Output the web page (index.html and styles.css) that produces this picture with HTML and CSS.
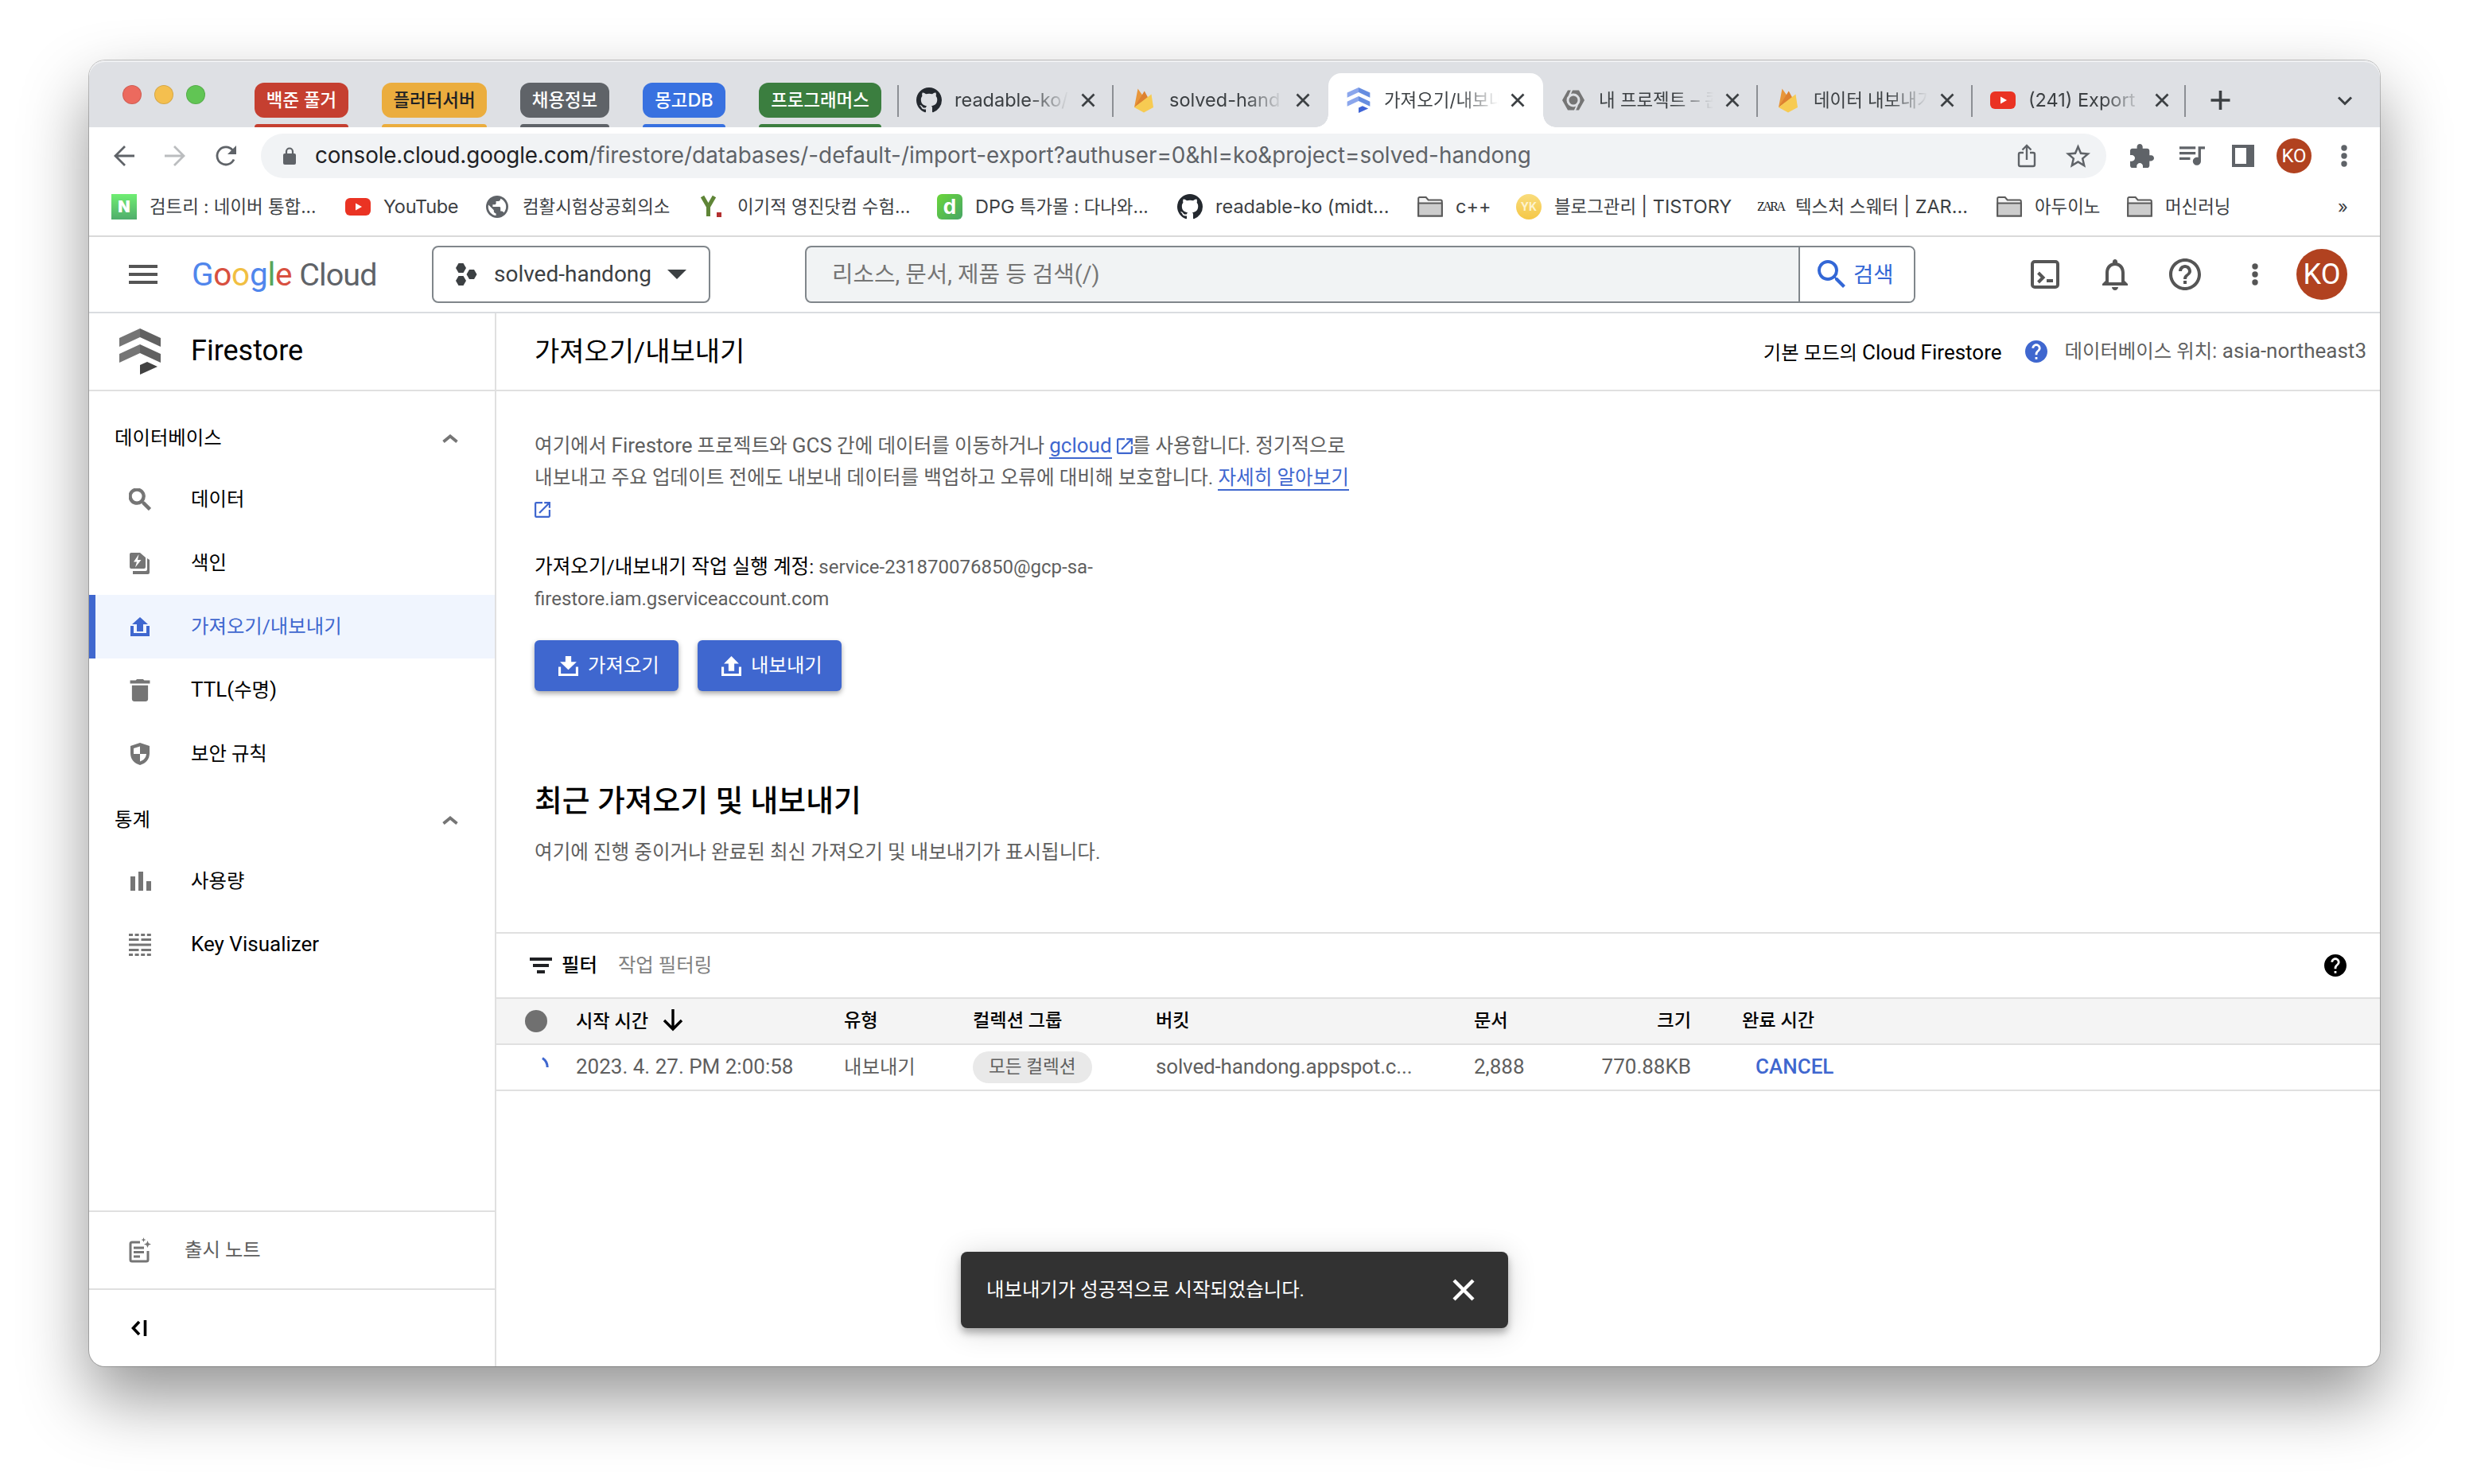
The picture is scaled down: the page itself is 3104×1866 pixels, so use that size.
FILE: index.html
```html
<!DOCTYPE html>
<html lang="ko">
<head>
  <meta charset="UTF-8" />
  <title>가져오기/내보내기 – Firestore</title>
  <link rel="stylesheet" href="styles.css">
</head>
<body>

  <!-- icons -->
  <svg class="sprite" xmlns="http://www.w3.org/2000/svg">
    <symbol id="i-close" viewBox="0 0 16 16"><path d="M2 2l12 12M14 2L2 14" fill="none" stroke="currentColor" stroke-width="2.2"/></symbol>
    <symbol id="i-github" viewBox="0 0 16 16"><path d="M8 0C3.58 0 0 3.58 0 8c0 3.54 2.29 6.53 5.47 7.59.4.07.55-.17.55-.38 0-.19-.01-.82-.01-1.49-2.01.37-2.53-.49-2.69-.94-.09-.23-.48-.94-.82-1.13-.28-.15-.68-.52-.01-.53.63-.01 1.08.58 1.23.82.72 1.21 1.87.87 2.33.66.07-.52.28-.87.51-1.07-1.78-.2-3.64-.89-3.64-3.95 0-.87.31-1.59.82-2.15-.08-.2-.36-1.02.08-2.12 0 0 .67-.21 2.2.82.64-.18 1.32-.27 2-.27.68 0 1.36.09 2 .27 1.53-1.04 2.2-.82 2.2-.82.44 1.1.16 1.92.08 2.12.51.56.82 1.27.82 2.15 0 3.07-1.87 3.75-3.65 3.95.29.25.54.73.54 1.48 0 1.07-.01 1.93-.01 2.2 0 .21.15.46.55.38A8.013 8.013 0 0 0 16 8c0-4.42-3.58-8-8-8z" fill="#24292f"/></symbol>
    <symbol id="i-firebase" viewBox="0 0 32 32"><path d="M4 25L8.500 1.500l6 8.500L16.500 5l4 7z" fill="#e8963a"/><path d="M4 25L16.800 4.500l4.500 8.500z" fill="#dd8130"/><path d="M4 25L25.500 8.500 28 25l-12 6.500z" fill="#f7cb52"/></symbol>
    <symbol id="i-firestore" viewBox="0 0 52 58"><path class="fs-l" d="M26 0L0 12v11l26-12zM26 20L0 32v11l26-12z"/><path class="fs-r" d="M26 0l26 12v11L26 11zM26 20l26 12v11L26 31z"/><path class="fs-d" d="M26 46l9-4 13 6-22 10z"/></symbol>
    <symbol id="i-youtube" viewBox="0 0 32 32"><rect x="0" y="5" width="32" height="22" rx="6" fill="#ea3323"/><path d="M13 11.500v9l8-4.500z" fill="#fff"/></symbol>
    <symbol id="i-folder" viewBox="0 0 32 32"><path d="M1.200 27.500V5.500a1.500 1.500 0 0 1 1.500-1.500h8l3 3.500h15.600a1.500 1.500 0 0 1 1.500 1.500v18.500z" fill="#f4f4f4" stroke="#5a5a5a" stroke-width="2"/><path d="M1.200 11.500h29.600v16H1.200z" fill="#cdcdcd" stroke="#5a5a5a" stroke-width="2"/></symbol>
    <symbol id="i-globe" viewBox="2 2 20 20"><path fill="#5f6368" d="M12 2C6.480 2 2 6.480 2 12s4.480 10 10 10 10-4.480 10-10S17.520 2 12 2zm-1 17.930c-3.950-.49-7-3.850-7-7.930 0-.62.080-1.210.21-1.790L9 15v1c0 1.100.9 2 2 2v1.930zm6.900-2.540c-.26-.81-1-1.390-1.900-1.390h-1v-3c0-.55-.45-1-1-1H8v-2h2c.55 0 1-.45 1-1V7h2c1.100 0 2-.9 2-2v-.41c2.930 1.190 5 4.060 5 7.410 0 2.080-.8 3.970-2.100 5.390z"/></symbol>
    <symbol id="i-search" viewBox="3 3 18 18"><path fill="currentColor" d="M15.500 14h-.79l-.28-.27A6.471 6.471 0 0 0 16 9.500 6.500 6.500 0 1 0 9.500 16c1.610 0 3.090-.59 4.230-1.570l.27.28v.79l5 4.990L20.490 19l-4.990-5zm-6 0C7.010 14 5 11.990 5 9.500S7.010 5 9.500 5 14 7.010 14 9.500 11.990 14 9.500 14z"/></symbol>
    <symbol id="i-open" viewBox="3 3 18 18"><path fill="currentColor" d="M19 19H5V5h7V3H5a2 2 0 0 0-2 2v14a2 2 0 0 0 2 2h14c1.100 0 2-.9 2-2v-7h-2v7zM14 3v2h3.590l-9.830 9.830 1.410 1.410L19 6.410V10h2V3h-7z"/></symbol>
    <symbol id="i-help" viewBox="2 2 20 20"><path fill="currentColor" d="M12 2C6.480 2 2 6.480 2 12s4.480 10 10 10 10-4.480 10-10S17.520 2 12 2zm1 17h-2v-2h2v2zm2.070-7.750l-.9.92C13.450 12.900 13 13.500 13 15h-2v-.5c0-1.100.45-2.100 1.170-2.830l1.240-1.260c.37-.36.59-.86.59-1.410 0-1.100-.9-2-2-2s-2 .9-2 2H8c0-2.210 1.790-4 4-4s4 1.790 4 4c0 .88-.36 1.680-.93 2.250z"/></symbol>
    <symbol id="i-upload" viewBox="0 0 24 24"><path fill="currentColor" d="M0 11h4v9h16v-9h4v13H0zM12 0l10 9h-6v9H8V9H2z"/></symbol>
    <symbol id="i-export" viewBox="0 0 24 24"><path fill="currentColor" d="M0 13h3v8h18v-8h3v11H0zM12 0l9 9h-5.500v9h-7V9H3z"/></symbol>
    <symbol id="i-import" viewBox="0 0 24 24"><path fill="currentColor" d="M0 13h3v8h18v-8h3v11H0zM8.500 0h7v7H22l-10 9.500L2 7h6.500z"/></symbol>
    <symbol id="i-up" viewBox="0 0 20 11"><path d="M1.500 9.500L10 2.500l8.500 7" fill="none" stroke="#757575" stroke-width="3.800"/></symbol>
    <symbol id="i-dots" viewBox="0 0 8 28"><circle cx="4" cy="4" r="3.700"/><circle cx="4" cy="14" r="3.700"/><circle cx="4" cy="24" r="3.700"/></symbol>
  </svg>

  <div class="window">

    <div class="tabstrip">
      <div class="lights"><i class="red"></i><i class="yellow"></i><i class="green"></i></div>
      <div class="groups">
        <div class="group g-red"><span>백준 풀거</span></div>
        <div class="group g-orange"><span>플러터서버</span></div>
        <div class="group g-grey"><span>채용정보</span></div>
        <div class="group g-blue"><span>몽고<span class="en">DB</span></span></div>
        <div class="group g-green"><span>프로그래머스</span></div>
      </div>
      <div class="tabs">
        <div class="tab"><svg class="fav"><use href="#i-github"/></svg><span class="name en">readable-ko/</span><svg class="x"><use href="#i-close"/></svg></div>
        <div class="tab"><svg class="fav"><use href="#i-firebase"/></svg><span class="name en">solved-hand</span><svg class="x"><use href="#i-close"/></svg></div>
        <div class="tab active"><svg class="fav blue-fs"><use href="#i-firestore"/></svg><span class="name">가져오기/내보내기</span><svg class="x"><use href="#i-close"/></svg></div>
        <div class="tab"><svg class="fav" viewBox="0 0 32 32"><path d="M9 3.500h14L30 16l-7 12.500H9L2 16z" fill="#757575"/><circle cx="16" cy="16" r="7" fill="none" stroke="#dee0e4" stroke-width="3"/><path d="M17 31l4-9M15 1l-4 9" stroke="#dee0e4" stroke-width="2"/></svg><span class="name">내 프로젝트 – 콘</span><svg class="x"><use href="#i-close"/></svg></div>
        <div class="tab"><svg class="fav"><use href="#i-firebase"/></svg><span class="name">데이터 내보내기</span><svg class="x"><use href="#i-close"/></svg></div>
        <div class="tab"><svg class="fav"><use href="#i-youtube"/></svg><span class="name en">(241) Export</span><svg class="x"><use href="#i-close"/></svg></div>
      </div>
      <svg class="newtab" viewBox="0 0 24 24"><path d="M12 0v24M0 12h24" stroke="#3c4043" stroke-width="3.600"/></svg>
      <svg class="tabmenu" viewBox="0 0 18 12"><path d="M1 1.500l8 8 8-8" fill="none" stroke="#3c4043" stroke-width="3"/></svg>
    </div>

    <div class="toolbar">
      <svg class="nav" viewBox="0 0 26 26"><path d="M26 13H2M14 1L2 13l12 12" fill="none" stroke="#5f6368" stroke-width="2.800"/></svg>
      <svg class="nav" viewBox="0 0 26 26"><path d="M0 13h24M12 1l12 12-12 12" fill="none" stroke="#bbbdbf" stroke-width="2.800"/></svg>
      <svg class="nav" viewBox="0 0 26 26"><path d="M23 17.500A11 11 0 1 1 21.500 6" fill="none" stroke="#5f6368" stroke-width="2.800"/><path d="M26 0v11H15z" fill="#5f6368"/></svg>
      <div class="omnibox">
        <svg class="lock" viewBox="0 0 16 22"><rect y="8" width="16" height="14" rx="2" fill="#5f6368"/><path d="M4 9V5.500a4 4 0 0 1 8 0V9" fill="none" stroke="#5f6368" stroke-width="2.200"/></svg>
        <span class="url"><b>console.cloud.google.com</b>/firestore/databases/-default-/import-export?authuser=0&amp;hl=ko&amp;project=solved-handong</span>
        <svg class="share" viewBox="0 0 22 30"><path d="M7 11H3a2 2 0 0 0-2 2v13a2 2 0 0 0 2 2h16a2 2 0 0 0 2-2V13a2 2 0 0 0-2-2h-4M11 20V2M5.500 7.500L11 2l5.500 5.500" fill="none" stroke="#5f6368" stroke-width="2.400"/></svg>
        <svg class="star" viewBox="2 2 20 19"><path fill="#5f6368" d="M22 9.240l-7.190-.62L12 2 9.190 8.630 2 9.240l5.460 4.730L5.820 21 12 17.270 18.180 21l-1.630-7.030L22 9.240zM12 15.400l-3.760 2.270 1-4.280-3.320-2.880 4.380-.38L12 6.100l1.710 4.040 4.380.38-3.320 2.880 1 4.280L12 15.400z"/></svg>
      </div>
      <svg class="puzzle" viewBox="2 1 21 21"><path fill="#5f6368" d="M20.500 11H19V7c0-1.100-.9-2-2-2h-4V3.500C13 2.120 11.880 1 10.500 1S8 2.120 8 3.500V5H4c-1.100 0-1.990.9-1.990 2v3.800H3.500c1.490 0 2.700 1.210 2.700 2.700s-1.210 2.700-2.700 2.700H2V20c0 1.100.9 2 2 2h3.800v-1.500c0-1.490 1.210-2.700 2.700-2.700 1.490 0 2.700 1.210 2.700 2.700V22H17c1.100 0 2-.9 2-2v-4h1.500c1.380 0 2.500-1.120 2.500-2.500S21.880 11 20.500 11z"/></svg>
      <svg class="queue" viewBox="3 6 19 14"><path fill="#5f6368" d="M15 6H3v2h12V6zm0 4H3v2h12v-2zM3 16h8v-2H3v2zM17 6v8.180c-.31-.11-.65-.18-1-.18-1.660 0-3 1.340-3 3s1.340 3 3 3 3-1.340 3-3V8h3V6h-5z"/></svg>
      <svg class="panel" viewBox="0 0 28 28"><path d="M0 0h28v28H0zM4 4v20h14V4z" fill="#5f6368" fill-rule="evenodd"/></svg>
      <div class="me small">KO</div>
      <svg class="more"><use href="#i-dots"/></svg>
    </div>

    <div class="bookmarks">
      <div class="bm"><i class="ic naver">N</i>검트리 : 네이버 통합...</div>
      <div class="bm"><svg class="ic"><use href="#i-youtube"/></svg><span class="en">YouTube</span></div>
      <div class="bm"><svg class="ic globe"><use href="#i-globe"/></svg>컴활시험상공회의소</div>
      <div class="bm"><svg class="ic" viewBox="0 0 32 32"><path d="M4 3l7.500 13v12M19 3l-7.500 13" fill="none" stroke="#5f8537" stroke-width="5"/><rect x="22" y="23" width="6" height="6" fill="#b33030"/></svg>이기적 영진닷컴 수험...</div>
      <div class="bm"><i class="ic danawa">d</i><span><span class="en">DPG</span> 특가몰 : 다나와...</span></div>
      <div class="bm"><svg class="ic"><use href="#i-github"/></svg><span class="en">readable-ko (midt...</span></div>
      <div class="bm"><svg class="ic"><use href="#i-folder"/></svg><span class="en">c++</span></div>
      <div class="bm"><i class="ic yk">YK</i><span>블로그관리 <span class="en">| TISTORY</span></span></div>
      <div class="bm"><i class="ic zara">ZARA</i><span>텍스처 스웨터 <span class="en">| ZAR...</span></span></div>
      <div class="bm"><svg class="ic"><use href="#i-folder"/></svg>아두이노</div>
      <div class="bm"><svg class="ic"><use href="#i-folder"/></svg>머신러닝</div>
      <div class="bm overflow">»</div>
    </div>

    <header class="topbar">
      <svg class="burger" viewBox="0 0 36 24"><path d="M0 2h36M0 12h36M0 22h36" stroke="#555" stroke-width="4"/></svg>
      <div class="logo"><span class="c-b">G</span><span class="c-r">o</span><span class="c-y">o</span><span class="c-b">g</span><span class="c-g">l</span><span class="c-r">e</span><span class="cloud">Cloud</span></div>
      <div class="project">
        <svg class="hex" viewBox="0 0 27 28"><path d="M3.500 0h6L13 6l-3.500 6h-6L0 6zM17 8h6l3.500 6-3.500 6h-6l-3.500-6zM3.500 16h6l3.500 6-3.500 6h-6L0 22z" fill="#3c4043"/></svg>
        <span>solved-handong</span>
        <i class="caret"></i>
      </div>
      <div class="search">
        <div class="placeholder">리소스, 문서, 제품 등 검색(/)</div>
        <div class="go"><svg><use href="#i-search"/></svg>검색</div>
      </div>
      <div class="tools">
        <svg class="shell" viewBox="0 0 36 36"><rect x="2" y="2" width="32" height="32" rx="3" fill="none" stroke="#555" stroke-width="4"/><path d="M9.500 16l6 6-6 6" fill="none" stroke="#555" stroke-width="4"/><path d="M20 24h8v4h-8z" fill="#555"/></svg>
        <svg class="bell" viewBox="4 2.500 16 19.500"><path fill="#555" d="M12 22c1.100 0 2-.9 2-2h-4c0 1.100.9 2 2 2zm6-6v-5c0-3.070-1.630-5.640-4.500-6.320V4c0-.83-.67-1.500-1.500-1.500s-1.500.67-1.500 1.500v.68C7.640 5.360 6 7.920 6 11v5l-2 2v1h16v-1l-2-2zm-2 1H8v-6c0-2.480 1.510-4.500 4-4.500s4 2.020 4 4.500v6z"/></svg>
        <svg class="help" viewBox="2 2 20 20"><path fill="#555" d="M11 18h2v-2h-2v2zm1-16C6.480 2 2 6.480 2 12s4.480 10 10 10 10-4.480 10-10S17.520 2 12 2zm0 18c-4.410 0-8-3.590-8-8s3.590-8 8-8 8 3.590 8 8-3.590 8-8 8zm0-14c-2.210 0-4 1.790-4 4h2c0-1.100.9-2 2-2s2 .9 2 2c0 2-3 1.750-3 5h2c0-2.250 3-2.500 3-5 0-2.210-1.790-4-4-4z"/></svg>
        <svg class="dots"><use href="#i-dots"/></svg>
        <div class="me">KO</div>
      </div>
    </header>

    <div class="content">
      <aside class="sidebar">
        <div class="product"><svg class="grey-fs"><use href="#i-firestore"/></svg>Firestore</div>
        <nav>
          <div class="section">데이터베이스<svg><use href="#i-up"/></svg></div>
          <div class="item"><span class="icon"><svg class="w28 bold"><use href="#i-search"/></svg></span>데이터</div>
          <div class="item"><span class="icon"><svg class="w28" viewBox="0 0 28 28"><path d="M3 1h11l7 6v12a2 2 0 0 1-2 2H3a2 2 0 0 1-2-2V3a2 2 0 0 1 2-2zM5 24h16a2 2 0 0 0 2-2V8l3 2v16a2 2 0 0 1-2 2H5z" fill="#757575"/><path d="M12.500 3L6 12.500h4L8 19.500l7.500-9.500h-4.500z" fill="#fff"/></svg></span>색인</div>
          <div class="item selected"><span class="icon"><svg class="w24"><use href="#i-upload"/></svg></span>가져오기/내보내기</div>
          <div class="item"><span class="icon"><svg class="w28" viewBox="3 3 18 18"><path fill="#757575" d="M5.500 19c0 1.100.9 2 2 2h9c1.100 0 2-.9 2-2V8H5.500v11zM20 4h-4.500l-1-1h-5l-1 1H4v2.500h16V4z"/></svg></span><span><span class="en">TTL(</span>수명<span class="en">)</span></span></div>
          <div class="item"><span class="icon"><svg class="w28" viewBox="0 0 28 28"><path d="M14 0l12 4v9c0 8-5 13-12 15C7 26 2 21 2 13V4z" fill="#757575"/><path d="M14 4.500V14H6V7zM14 14h8c-.5 5-3.500 8-8 9.500z" fill="#fff"/></svg></span>보안 규칙</div>
          <div class="section">통계<svg><use href="#i-up"/></svg></div>
          <div class="item"><span class="icon"><svg class="w28" viewBox="0 0 28 28"><path d="M2 8h6v18H2zM12 2h6v24h-6zM22 14h6v12h-6z" fill="#757575"/></svg></span>사용량</div>
          <div class="item"><span class="icon"><svg class="w28" viewBox="0 0 28 28"><path d="M0 1.500h28M0 26.500h28" stroke="#757575" stroke-width="3" stroke-dasharray="5 2.600"/><path d="M0 7.500h12.500M15.500 7.500H28M0 14h28M0 20.500h12.500M15.500 20.500H28" stroke="#757575" stroke-width="3"/></svg></span><span class="en">Key Visualizer</span></div>
        </nav>
        <div class="notes"><svg viewBox="0 0 28 32"><path d="M14 6H4a2 2 0 0 0-2 2v20a2 2 0 0 0 2 2h18a2 2 0 0 0 2-2V17" fill="none" stroke="#757575" stroke-width="3"/><path d="M6 13h13M6 18.500h13M6 24h8" stroke="#757575" stroke-width="3"/><path d="M23.500 4l1.300 3.200L28 8.500l-3.200 1.300L23.500 13l-1.300-3.200L19 8.500l3.200-1.300zM18.500 0l.8 2.200 2.200.8-2.200.8-.8 2.200-.8-2.200-2.200-.8 2.200-.8z" fill="#757575"/></svg>출시 노트</div>
        <div class="collapse"><svg viewBox="0 0 20 20"><path d="M10 2l-7.500 8L10 18M17.500 0v20" fill="none" stroke="#000" stroke-width="3.600"/></svg></div>
      </aside>

      <main>
        <div class="titlebar">
          <h1>가져오기/내보내기</h1>
          <span class="mode">기본 모드의 <span class="en">Cloud Firestore</span></span>
          <svg><use href="#i-help"/></svg>
          <span class="location">데이터베이스 위치<span class="en">: asia-northeast3</span></span>
        </div>

        <div class="intro">
          <p>여기에서 <span class="en">Firestore</span> 프로젝트와 <span class="en">GCS</span> 간에 데이터를 이동하거나 <a class="en" href="#">gcloud</a> <svg class="ext"><use href="#i-open"/></svg>를 사용합니다. 정기적으로<br>
          내보내고 주요 업데이트 전에도 내보내 데이터를 백업하고 오류에 대비해 보호합니다. <a href="#">자세히 알아보기</a><br>
          <svg class="ext last"><use href="#i-open"/></svg></p>
          <p class="account"><strong>가져오기/내보내기 작업 실행 계정:</strong> <span class="mail">service-231870076850@gcp-sa-<br>firestore.iam.gserviceaccount.com</span></p>
          <div class="buttons">
            <button type="button"><svg><use href="#i-import"/></svg>가져오기</button>
            <button type="button"><svg><use href="#i-export"/></svg>내보내기</button>
          </div>
          <h2>최근 가져오기 및 내보내기</h2>
          <p class="recent">여기에 진행 중이거나 완료된 최신 가져오기 및 내보내기가 표시됩니다.</p>
        </div>

        <div class="filter">
          <svg class="funnel" viewBox="0 0 28 20"><path d="M0 2h28M4 10h20M9 18h10" stroke="#202124" stroke-width="4"/></svg>
          <b>필터</b>
          <span>작업 필터링</span>
          <svg class="tip"><use href="#i-help"/></svg>
        </div>
        <div class="row head">
          <span><i class="status"></i></span>
          <span>시작 시간<svg class="sort" viewBox="0 0 26 28"><path d="M13 0v25M2 14l11 11 11-11" fill="none" stroke="#000" stroke-width="3.400"/></svg></span>
          <span>유형</span>
          <span>컬렉션 그룹</span>
          <span>버킷</span>
          <span>문서</span>
          <span class="size">크기</span>
          <span class="done">완료 시간</span>
        </div>
        <div class="row">
          <span><svg class="spinner" viewBox="0 0 28 28"><path d="M22 2.500A14 14 0 0 1 28.200 14" fill="none" stroke="#3f67cf" stroke-width="3"/></svg></span>
          <span class="en">2023. 4. 27. PM 2:00:58</span>
          <span>내보내기</span>
          <span><i class="chip">모든 컬렉션</i></span>
          <span class="en bucket">solved-handong.appspot.c...</span>
          <span class="en">2,888</span>
          <span class="en size">770.88KB</span>
          <span class="en done cancel">CANCEL</span>
        </div>
      </main>
    </div>

    <div class="toast">내보내기가 성공적으로 시작되었습니다.<svg><use href="#i-close"/></svg></div>
  </div>

</body>
</html>
```

FILE: styles.css
```css
* {
  box-sizing: border-box;
}

body {
  margin: 0;
  height: 1866px;
  padding: 76px 112px 0;
  background: #fff;
  font-family: Roboto, 'Noto Sans CJK KR', sans-serif;
  font-size: 24.4px;
  line-height: 1.2;
  color: #000;
  overflow: hidden;
}

svg {
  display: block;
  flex: none;
  overflow: visible;
}

i {
  font-style: normal;
}

.sprite {
  position: absolute;
  width: 0;
  height: 0;
}

.en {
  font-size: 26px;
}

.window {
  position: relative;
  display: flex;
  flex-direction: column;
  width: 2880px;
  height: 1642px;
  background: #fff;
  border-radius: 20px;
  box-shadow: 0 0 0 1px rgba(0,0,0,0.22), 0 40px 84px rgba(0,0,0,0.42);
}

/* browser tabs */
.tabstrip {
  display: flex;
  height: 84px;
  background: #dee0e4;
  border-radius: 20px 20px 0 0;
  font-family: Inter, 'Noto Sans CJK KR', sans-serif;
  font-size: 22.4px;
  color: #3c4043;
  box-shadow: inset 0 2px 0 rgba(255,255,255,0.5);
}

.tabstrip .en,
.bookmarks .en {
  font-size: 23.5px;
}

.lights {
  display: flex;
  gap: 16px;
  padding: 31px 0 0 42px;
  width: 208px;
}

.lights i {
  width: 24px;
  height: 24px;
  border-radius: 50%;
  border: 1px solid rgba(0,0,0,0.12);
}

.lights .red { background: #ec6a5e; }
.lights .yellow { background: #f4bf4f; }
.lights .green { background: #61c554; }

.groups {
  display: grid;
  grid-template-columns: 118px 132px 112px 104px 154px;
  gap: 42px;
  padding-top: 28px;
  width: 810px;
}

.group {
  display: flex;
  flex-direction: column;
  gap: 8px;
  line-height: 43px;
  text-align: center;
  font-weight: 500;
  color: #fff;
  white-space: nowrap;
}

.group > span {
  height: 44px;
  border-radius: 12px;
  background: var(--c);
}

.group::after {
  content: '';
  height: 4px;
  border-radius: 4px 4px 0 0;
  background: var(--c);
}

.g-red { --c: #c53f30; }
.g-orange { --c: #ebad3e; color: #202124; }
.g-grey { --c: #5f6368; }
.g-blue { --c: #3871e0; }
.g-green { --c: #3b7e3f; }

.tabs {
  display: flex;
  padding-top: 16px;
}

.tab {
  position: relative;
  display: flex;
  align-items: center;
  width: 270px;
  height: 68px;
  padding: 0 0 0 22px;
}

.tab::before {
  content: '';
  position: absolute;
  left: -2px;
  top: 15px;
  width: 2px;
  height: 40px;
  background: #8c8f94;
}

.tab.active {
  background: #fff;
  border-radius: 16px 16px 0 0;
}

.tab.active::before,
.tab.active::after {
  content: '';
  position: absolute;
  left: -16px;
  top: auto;
  bottom: 0;
  width: 16px;
  height: 16px;
  background: radial-gradient(circle at 0 0, transparent 15.5px, #fff 16px);
}

.tab.active::after {
  left: auto;
  right: -16px;
  background: radial-gradient(circle at 100% 0, transparent 15.5px, #fff 16px);
}

.tab.active + .tab::before {
  display: none;
}

.tab:last-child::after {
  content: '';
  position: absolute;
  right: 2px;
  top: 15px;
  width: 2px;
  height: 40px;
  background: #8c8f94;
}

.tab .fav {
  width: 32px;
  height: 32px;
}

.blue-fs { --l: #8ba6ec; --r: #668de0; --d: #3f64d6; }
.grey-fs { --l: #757575; --r: #616161; --d: #424242; }
.fs-l { fill: var(--l); }
.fs-r { fill: var(--r); }
.fs-d { fill: var(--d); }

.name {
  width: 144px;
  margin-left: 16px;
  overflow: hidden;
  white-space: nowrap;
  -webkit-mask-image: linear-gradient(90deg, #000 65%, transparent);
  mask-image: linear-gradient(90deg, #000 65%, transparent);
}

.tab .x {
  width: 20px;
  height: 20px;
  margin-left: 14px;
}

.newtab {
  width: 25px;
  height: 24px;
  margin: 38px 0 0 29px;
}

.tabmenu {
  width: 18px;
  height: 12px;
  margin: 45px 0 0 135px;
}

/* address bar */
.toolbar {
  display: flex;
  align-items: center;
  height: 72px;
  padding-left: 31px;
}

.nav {
  width: 26px;
  height: 26px;
  margin-right: 38px;
}

.toolbar .nav:nth-child(3) {
  margin-right: 31px;
}

.omnibox {
  display: flex;
  align-items: center;
  width: 2320px;
  height: 56px;
  padding: 0 20px 0 28px;
  border-radius: 28px;
  background: #f1f3f5;
}

.lock {
  width: 16px;
  height: 22px;
}

.url {
  flex: 1;
  margin-left: 24px;
  font-family: Inter, sans-serif;
  font-size: 27.850px;
  color: #5f6368;
  white-space: nowrap;
}

.url b {
  font-weight: 400;
  letter-spacing: -0.15px;
  color: #202124;
}

.share {
  width: 22px;
  height: 30px;
  margin-right: 38px;
}

.star {
  width: 31px;
  height: 30px;
}

.puzzle {
  width: 30px;
  height: 30px;
  margin-left: 30px;
}

.queue {
  width: 32px;
  height: 24px;
  margin-left: 32px;
}

.panel {
  width: 28px;
  height: 28px;
  margin: 0 28px 0 34px;
}

.me {
  width: 64px;
  height: 64px;
  border-radius: 50%;
  background: #b14220;
  color: #fff;
  font-size: 36px;
  line-height: 64px;
  text-align: center;
}

.me.small {
  width: 44px;
  height: 44px;
  font-size: 24px;
  line-height: 44px;
}

.more {
  width: 8px;
  height: 28px;
  margin-left: 37px;
  fill: #5f6368;
}

/* bookmarks */
.bookmarks {
  display: grid;
  grid-template-columns: 294px 175px 270px 299px 302px 302px 124px 303px 301px 164px 265px auto;
  height: 66px;
  padding-left: 28px;
  padding-bottom: 8px;
  border-bottom: 2px solid #dadada;
  font-family: Inter, 'Noto Sans CJK KR', sans-serif;
  font-size: 22.4px;
  color: #3c4043;
  white-space: nowrap;
}

.bm {
  display: flex;
  align-items: center;
  gap: 16px;
}

.bm:nth-child(2) .en {
  letter-spacing: -0.3px;
}

.ic {
  width: 32px;
  height: 32px;
  flex: none;
  line-height: 32px;
  text-align: center;
  color: #fff;
  font-weight: 700;
}

.globe { padding: 2px; }

.naver {
  background: linear-gradient(#6fee72, #50ad6c);
  font-weight: 900;
  font-size: 20px;
}

.danawa {
  background: linear-gradient(135deg, #6ad63a, #47a565);
  border-radius: 6px;
  font-size: 26px;
}

.yk {
  border-radius: 50%;
  background: linear-gradient(#f9dc7c, #f5c746);
  color: #fdf3cf;
  font-size: 14px;
}

.zara {
  color: #202124;
  font-family: 'Liberation Serif', serif;
  font-size: 16px;
  font-weight: 400;
  letter-spacing: -2.5px;
}

.overflow { font-size: 22px; }

/* cloud console header */
.topbar {
  display: flex;
  align-items: center;
  height: 96px;
  border-bottom: 2px solid #dadce0;
  padding-left: 50px;
}

.burger {
  width: 36px;
  height: 24px;
}

.logo {
  width: 302px;
  margin-left: 43px;
  font-size: 40.500px;
  letter-spacing: -0.3px;
  white-space: nowrap;
}

.c-b { color: #5086ec; }
.c-r { color: #d85040; }
.c-y { color: #f1bf42; }
.c-g { color: #58a55c; }

.cloud {
  margin-left: 9px;
  color: #5f6368;
  font-size: 39.500px;
  letter-spacing: -0.9px;
}

.project {
  display: flex;
  align-items: center;
  width: 350px;
  height: 72px;
  padding-left: 28px;
  border: 2px solid #80868b;
  border-radius: 8px;
  font-size: 28px;
  color: #3c4043;
}

.hex {
  width: 27px;
  height: 28px;
  margin-right: 21px;
}

.caret {
  margin-left: 20px;
  border: 12px solid transparent;
  border-top-color: #3c4043;
  border-bottom: 0;
}

.search {
  display: flex;
  width: 1396px;
  height: 72px;
  margin-left: 119px;
  border: 2px solid #80868b;
  border-radius: 8px;
  background: #f1f3f4;
  overflow: hidden;
}

.placeholder {
  flex: 1;
  padding-left: 32px;
  line-height: 68px;
  font-size: 28.800px;
  color: #757575;
}

.go {
  display: flex;
  align-items: center;
  gap: 9px;
  width: 145px;
  padding-left: 22px;
  border-left: 2px solid #80868b;
  background: #fff;
  color: #3367d6;
  font-size: 27.500px;
}

.go svg {
  width: 36px;
  height: 36px;
}

.tools {
  display: flex;
  align-items: center;
  margin-left: 145px;
}

.shell { width: 36px; height: 36px; }
.bell { width: 32px; height: 39px; margin-left: 54px; }
.help { width: 40px; height: 40px; margin-left: 52px; }
.dots { width: 8px; height: 28px; margin: 0 48px 0 64px; fill: #555; }

/* layout */
.content {
  display: flex;
  flex: 1;
}

.sidebar {
  display: flex;
  flex-direction: column;
  width: 512px;
  border-right: 2px solid #e0e0e0;
}

.product {
  display: flex;
  align-items: center;
  gap: 38px;
  height: 98px;
  padding-left: 38px;
  border-bottom: 2px solid #e0e0e0;
  font-size: 36px;
}

.product svg {
  width: 52px;
  height: 58px;
}

.sidebar nav {
  flex: 1;
  padding-top: 16px;
}

.section {
  display: flex;
  align-items: center;
  justify-content: space-between;
  height: 80px;
  padding: 6px 46px 0 32px;
}

.section svg {
  width: 20px;
  height: 11px;
}

.item {
  display: flex;
  align-items: center;
  height: 80px;
  padding-left: 40px;
  border-left: 8px solid transparent;
}

.icon {
  display: flex;
  justify-content: center;
  width: 32px;
  margin-right: 48px;
  color: #757575;
}

.w28 { width: 28px; height: 28px; }
.w24 { width: 24px; height: 26px; }

.bold {
  stroke: currentColor;
  stroke-width: 0.8;
}

.selected,
.selected .icon {
  color: #3f67cf;
}

.selected {
  background: #f0f5fe;
  border-left-color: #3f67cf;
}

.notes,
.collapse {
  display: flex;
  align-items: center;
  height: 98px;
  padding-left: 50px;
  border-top: 2px solid #e0e0e0;
  color: #5f5f5f;
}

.notes svg {
  width: 28px;
  height: 32px;
  margin-right: 42px;
}

.collapse svg {
  width: 20px;
  height: 20px;
  margin-left: 3px;
}

main {
  flex: 1;
}

.titlebar {
  display: flex;
  align-items: center;
  height: 98px;
  padding: 0 17px 0 48px;
  border-bottom: 2px solid #e0e0e0;
}

.titlebar h1 {
  flex: 1;
  margin: 0;
  font-size: 34px;
  font-weight: 400;
}

.titlebar svg {
  width: 28px;
  height: 28px;
  margin: 0 22px 0 29px;
  color: #3f67cf;
}

.mode {
  padding-top: 3px;
}

.location,
.intro p {
  color: #5f5f5f;
}

.intro {
  height: 680px;
  padding: 48px 48px 0;
  white-space: nowrap;
}

.intro p {
  margin: 0;
  font-size: 24.600px;
  line-height: 40px;
}

.intro a {
  color: #3f67cf;
  text-decoration: none;
  border-bottom: 2px solid #3f67cf;
}

.ext {
  display: inline-block;
  width: 20px;
  height: 20px;
  vertical-align: -2px;
  color: #3f67cf;
}

.intro .account {
  margin-top: 32px;
}

.account strong {
  font-weight: 400;
  color: #000;
}

.mail {
  font-size: 24px;
}

.buttons {
  display: flex;
  gap: 24px;
  margin-top: 32px;
}

.buttons button {
  display: flex;
  align-items: center;
  gap: 12px;
  width: 181px;
  height: 64px;
  padding: 0 0 0 30px;
  border: 0;
  border-radius: 6px;
  background: #3f67cf;
  color: #fff;
  font: inherit;
  box-shadow: 0 3px 6px rgba(0,0,0,0.35);
}

.buttons svg {
  width: 25px;
  height: 25px;
}

.intro h2 {
  margin: 108px 0 0;
  font-size: 37.800px;
  font-weight: 500;
  line-height: 60px;
}

.intro .recent {
  margin-top: 15px;
}

/* operations table */
.filter {
  display: flex;
  align-items: center;
  height: 82px;
  padding: 0 42px;
  border-top: 2px solid #e0e0e0;
}

.funnel {
  width: 28px;
  height: 20px;
}

.filter b {
  margin: 0 26px 0 12px;
  font-weight: 500;
}

.filter span {
  flex: 1;
  color: #808080;
}

.tip {
  width: 28px;
  height: 28px;
}

.row {
  display: grid;
  grid-template-columns: 64px 337px 162px 230px 400px 103px 170px 1fr;
  align-items: center;
  height: 58px;
  padding-left: 36px;
  border-bottom: 2px solid #e0e0e0;
  color: #5f5f5f;
  white-space: nowrap;
}

.head {
  height: 60px;
  border-top: 2px solid #e0e0e0;
  background: #f4f4f4;
  color: #000;
  font-weight: 500;
  font-size: 23.200px;
}

.status {
  display: block;
  width: 28px;
  height: 28px;
  border-radius: 50%;
  background: #707070;
}

.sort {
  display: inline-block;
  width: 26px;
  height: 28px;
  margin-left: 18px;
  vertical-align: -5px;
}

.spinner {
  width: 28px;
  height: 28px;
}

.chip {
  display: inline-block;
  height: 40px;
  padding: 0 20px;
  border-radius: 20px;
  background: #e9e9e9;
  line-height: 39px;
  font-size: 22.600px;
}

.bucket {
  letter-spacing: -0.15px;
}

.size {
  text-align: right;
}

.done {
  padding-left: 64px;
}

.cancel {
  padding-left: 81px;
  color: #3f67cf;
  font-weight: 500;
}

.toast {
  position: absolute;
  left: 1096px;
  bottom: 48px;
  display: flex;
  align-items: center;
  justify-content: space-between;
  width: 688px;
  height: 96px;
  padding: 0 40px 0 32px;
  border-radius: 8px;
  background: #323232;
  color: #fff;
  box-shadow: 0 6px 10px rgba(0,0,0,0.28), 0 4px 36px rgba(0,0,0,0.16);
}

.toast svg {
  width: 32px;
  height: 32px;
}
```
